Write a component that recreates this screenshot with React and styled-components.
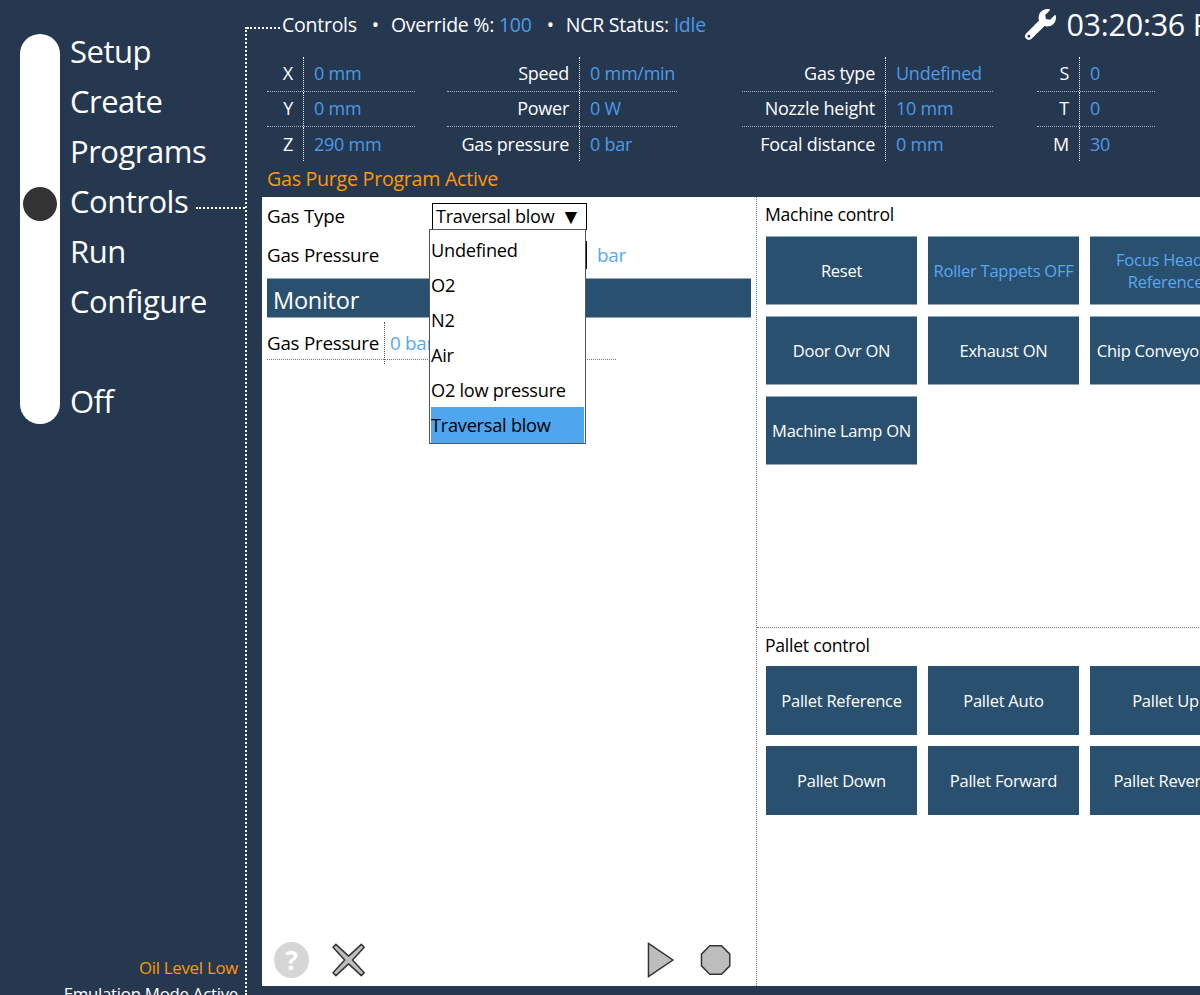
import React from 'react'
import styled, { createGlobalStyle } from 'styled-components'
import { FaWrench } from 'react-icons/fa'

const GlobalStyle = createGlobalStyle`
  html, body {
    margin: 0;
    padding: 0;
    background: #263750;
  }
  body {
    font-family: "Open Sans", "Noto Sans", sans-serif;
    font-size: 18px;
    letter-spacing: -0.25px;
    color: #000;
  }
  * {
    box-sizing: border-box;
  }
`

const Page = styled.div`
  width: 1200px;
  height: 995px;
  overflow: hidden;
  background: #263750;
`

const Shell = styled.div`
  display: flex;
  width: 1238px;
  height: 995px;
`

const Sidebar = styled.aside`
  display: flex;
  flex-direction: column;
  flex: 0 0 245px;
  height: 995px;
  overflow: hidden;
  color: #fff;
`

const SideTop = styled.div`
  display: flex;
  padding: 26px 0 0 20px;
`

const Pill = styled.div`
  flex: 0 0 40px;
  height: 390px;
  margin: 8px 10px 0 0;
  padding: 153px 3px 0;
  border-radius: 20px;
  background: #fff;
`

const Knob = styled.div`
  width: 34px;
  height: 34px;
  border-radius: 50%;
  background: #333;
`

const NavList = styled.nav`
  display: flex;
  flex-direction: column;
  flex: 1;
`

const NavItem = styled.div`
  display: flex;
  align-items: center;
  gap: 8px;
  height: 50px;
  margin-top: ${(p) => p.$gap || 0}px;
  font-size: 31px;
  letter-spacing: -0.5px;

  ${(p) =>
    p.$active &&
    `
    &::after {
      content: '';
      flex: 1;
      margin-top: 13px;
      border-top: 2px dotted #fff;
    }
  `}
`

const SideFooter = styled.div`
  display: flex;
  flex-direction: column;
  align-items: flex-end;
  margin-top: auto;
  padding-right: 7px;
  height: 40px;
  white-space: nowrap;
`

const OilWarning = styled.div`
  font-size: 16.8px;
  line-height: 26px;
  color: #ff9900;
`

const EmulationNote = styled.div`
  font-size: 16.8px;
  line-height: 26px;
  color: #fff;
`

const Main = styled.main`
  position: relative;
  flex: 1;
  min-width: 0;
  padding-left: 2px;

  &::before {
    content: '';
    position: absolute;
    left: 0;
    top: 27px;
    bottom: 0;
    border-left: 2px dotted #fff;
  }
`

const Header = styled.header`
  display: flex;
  align-items: center;
  height: 48px;
  font-size: 19.5px;
  color: #fff;

  &::before {
    content: '';
    width: 33px;
    margin: 8px 2px 0 0;
    border-top: 2px dotted #fff;
  }
`

const HeaderItem = styled.span`
  white-space: nowrap;
  &:not(:first-of-type)::before {
    content: '•';
    margin: 0 12px 0 15px;
  }
`

const Accent = styled.span`
  color: #4a9be8;
`

const Clock = styled.div`
  display: flex;
  align-items: center;
  gap: 10px;
  margin-left: auto;
  font-size: 30.5px;
  white-space: nowrap;
`

const Telemetry = styled.section`
  display: flex;
  margin-top: 9px;
  padding-left: 20px;
  color: #fff;
`

const Group = styled.div`
  flex: 0 0 ${(p) => p.$width}px;
  margin-left: ${(p) => p.$offset || 0}px;
`

const GroupRow = styled.div`
  display: grid;
  grid-template-columns: ${(p) => p.$label}px 1fr;
  height: 35px;
  line-height: 32px;

  &:not(:last-child) {
    border-bottom: 1px dotted #aab4c0;
  }
  &:last-child {
    height: 29px;
    line-height: 34px;
  }
`

const GroupLabel = styled.div`
  padding-right: 10px;
  text-align: right;
  white-space: nowrap;
`

const GroupValue = styled.div`
  padding-left: 10px;
  border-left: 1px dotted #fff;
  color: #4a9be8;
  white-space: nowrap;
`

const Notice = styled.div`
  height: 31px;
  margin-top: 10px;
  padding-left: 20px;
  font-size: 19.6px;
  line-height: 26px;
  color: #ff9900;
`

const Panel = styled.section`
  display: grid;
  grid-template-columns: 495px 1fr;
  height: 789px;
  margin-left: 15px;
  background: #fff;
`

const LeftPane = styled.div`
  display: flex;
  flex-direction: column;
  padding: 5px 5px 8px;
  border-right: 1px dotted #777;
`

const FormRow = styled.div`
  display: grid;
  grid-template-columns: 165px 155px auto;
  align-items: center;
  height: 28px;
  margin-bottom: ${(p) => p.$spacing || 0}px;
  white-space: nowrap;
`

const FieldLabel = styled.span`
  font-size: 18.8px;
`

const SelectWrap = styled.div`
  position: relative;
`

const SelectBox = styled.div`
  display: flex;
  align-items: center;
  justify-content: space-between;
  height: 27px;
  padding: 0 5px 0 3px;
  border: 1px solid #000;
`

const Caret = styled.span`
  font-size: 21px;
  line-height: 1;
`

const Menu = styled.ul`
  position: absolute;
  left: -3px;
  top: 26px;
  z-index: 2;
  width: 157px;
  margin: 0;
  padding: 2px 1px 0;
  list-style: none;
  border: 1px solid #555;
  background: #fff;
`

const MenuItem = styled.li`
  height: 35.2px;
  line-height: 36px;
  font-size: 18.2px;
  white-space: nowrap;
  background: ${(p) => (p.$selected ? '#4fa5ee' : 'transparent')};
`

const NumberBox = styled.div`
  height: 28px;
  border: 1px solid #000;
`

const Unit = styled.span`
  padding-left: 10px;
  font-size: 18.8px;
  color: #5aa7f0;
`

const SectionBar = styled.div`
  height: 40px;
  margin-top: 9px;
  padding-left: 6px;
  border-top: 1px solid #8fa5b8;
  border-bottom: 1px solid #8fa5b8;
  font-size: 23.5px;
  line-height: 42px;
  color: #fff;
  background: #2a5070;
`

const Readout = styled.div`
  display: grid;
  grid-template-columns: 117px 1fr;
  width: 349px;
  height: 39px;
  margin-top: 3px;
  padding-top: 1px;
  font-size: 18.8px;
  line-height: 42px;
  border-bottom: 1px dotted #777;
  white-space: nowrap;
`

const ReadoutValue = styled.div`
  padding-left: 5px;
  border-left: 1px dotted #555;
  color: #5aa7f0;
`

const Toolbar = styled.div`
  display: flex;
  align-items: center;
  height: 36px;
  margin-top: auto;
  padding: 0 20px 0 7px;
`

const HelpButton = styled.div`
  display: flex;
  align-items: center;
  justify-content: center;
  width: 36px;
  height: 36px;
  margin-right: 23px;
  border-radius: 50%;
  font-size: 26px;
  font-weight: 700;
  color: #fff;
  background: #d6d6d6;
`

const ToolIcon = styled.svg`
  display: block;
  margin-left: ${(p) => p.$offset || 0}px;
`

const RightPane = styled.div`
  display: flex;
  flex-direction: column;
`

const ControlSection = styled.div`
  height: ${(p) => p.$height}px;
  padding-left: 9px;
  border-bottom: ${(p) => (p.$divided ? '1px dotted #777' : 'none')};
`

const SectionTitle = styled.div`
  height: ${(p) => p.$height}px;
  margin-left: -1px;
  font-size: 17.6px;
  line-height: 35px;
`

const ButtonGrid = styled.div`
  display: grid;
  grid-template-columns: repeat(3, 151px);
  grid-auto-rows: 69px;
  gap: 11px;
`

const ControlButton = styled.div`
  display: flex;
  align-items: center;
  justify-content: center;
  text-align: center;
  font-size: 16.5px;
  line-height: 22px;
  color: ${(p) => (p.$on ? '#5aa7f0' : '#fff')};
  background: #2a5070;
  border-top: ${(p) => (p.$edged ? '1px solid #8fa5b8' : 'none')};
  border-bottom: ${(p) => (p.$edged ? '1px solid #8fa5b8' : 'none')};
`

const navItems = [
  { label: 'Setup' },
  { label: 'Create' },
  { label: 'Programs' },
  { label: 'Controls', active: true },
  { label: 'Run' },
  { label: 'Configure' },
  { label: 'Off', gap: 50 }
]

const telemetry = [
  {
    width: 148,
    label: 36,
    rows: [
      ['X', '0 mm'],
      ['Y', '0 mm'],
      ['Z', '290 mm']
    ]
  },
  {
    width: 230,
    label: 132,
    offset: 32,
    rows: [
      ['Speed', '0 mm/min'],
      ['Power', '0 W'],
      ['Gas pressure', '0 bar']
    ]
  },
  {
    width: 251,
    label: 143,
    offset: 65,
    rows: [
      ['Gas type', 'Undefined'],
      ['Nozzle height', '10 mm'],
      ['Focal distance', '0 mm']
    ]
  },
  {
    width: 118,
    label: 42,
    offset: 44,
    rows: [
      ['S', '0'],
      ['T', '0'],
      ['M', '30']
    ]
  }
]

const gasTypes = ['Undefined', 'O2', 'N2', 'Air', 'O2 low pressure', 'Traversal blow']

// the first line of the focus button sits further left than its centre, the nbsp's push it there
const machineButtons = [
  { label: 'Reset' },
  { label: 'Roller Tappets OFF', on: true },
  { label: 'Focus Head\u00a0\u00a0\u00a0 Reference', on: true },
  { label: 'Door Ovr ON' },
  { label: 'Exhaust ON' },
  { label: 'Chip Conveyor ON' },
  { label: 'Machine Lamp ON' }
]

const palletButtons = [
  'Pallet Reference',
  'Pallet Auto',
  'Pallet Up',
  'Pallet Down',
  'Pallet Forward',
  'Pallet Reverse'
]

const CloseIcon = () => (
  <ToolIcon width="34" height="34" viewBox="0 0 34 34">
    <path
      d="M4 1 L17 13 L30 1 L33 4 L21 17 L33 30 L30 33 L17 21 L4 33 L1 30 L13 17 L1 4 Z"
      fill="#bdbdbd"
      stroke="#333"
      strokeWidth="1.5"
      strokeLinejoin="round"
    />
  </ToolIcon>
)

const PlayIcon = () => (
  <ToolIcon $offset={282} width="28" height="38" viewBox="0 0 28 38">
    <path d="M1.5 2 L26.5 19 L1.5 36 Z" fill="#bdbdbd" stroke="#333" strokeWidth="1.5" />
  </ToolIcon>
)

const StopIcon = () => (
  <ToolIcon $offset={25} width="32" height="32" viewBox="0 0 32 32">
    <path
      d="M10 1.5 L22 1.5 L30.5 10 L30.5 22 L22 30.5 L10 30.5 L1.5 22 L1.5 10 Z"
      fill="#bdbdbd"
      stroke="#333"
      strokeWidth="1.5"
    />
  </ToolIcon>
)

export default function App() {
  return (
    <Page>
      <GlobalStyle />
      <Shell>
        <Sidebar>
          <SideTop>
            <Pill>
              <Knob />
            </Pill>
            <NavList>
              {navItems.map((item) => (
                <NavItem key={item.label} $active={item.active} $gap={item.gap}>
                  {item.label}
                </NavItem>
              ))}
            </NavList>
          </SideTop>
          <SideFooter>
            <OilWarning>Oil Level Low</OilWarning>
            <EmulationNote>Emulation Mode Active</EmulationNote>
          </SideFooter>
        </Sidebar>
        <Main>
          <Header>
            <HeaderItem>Controls</HeaderItem>
            <HeaderItem>
              Override %: <Accent>100</Accent>
            </HeaderItem>
            <HeaderItem>
              NCR Status: <Accent>Idle</Accent>
            </HeaderItem>
            <Clock>
              <FaWrench size={31} />
              03:20:36 PM
            </Clock>
          </Header>
          <Telemetry>
            {telemetry.map((group) => (
              <Group key={group.width} $width={group.width} $offset={group.offset}>
                {group.rows.map(([label, value]) => (
                  <GroupRow key={label} $label={group.label}>
                    <GroupLabel>{label}</GroupLabel>
                    <GroupValue>{value}</GroupValue>
                  </GroupRow>
                ))}
              </Group>
            ))}
          </Telemetry>
          <Notice>Gas Purge Program Active</Notice>
          <Panel>
            <LeftPane>
              <FormRow $spacing={11}>
                <FieldLabel>Gas Type</FieldLabel>
                <SelectWrap>
                  <SelectBox>
                    Traversal blow
                    <Caret>▼</Caret>
                  </SelectBox>
                  <Menu>
                    {gasTypes.map((gas) => (
                      <MenuItem key={gas} $selected={gas === 'Traversal blow'}>
                        {gas}
                      </MenuItem>
                    ))}
                  </Menu>
                </SelectWrap>
              </FormRow>
              <FormRow>
                <FieldLabel>Gas Pressure</FieldLabel>
                <NumberBox />
                <Unit>bar</Unit>
              </FormRow>
              <SectionBar>Monitor</SectionBar>
              <Readout>
                <span>Gas Pressure</span>
                <ReadoutValue>0 bar</ReadoutValue>
              </Readout>
              <Toolbar>
                <HelpButton>?</HelpButton>
                <CloseIcon />
                <PlayIcon />
                <StopIcon />
              </Toolbar>
            </LeftPane>
            <RightPane>
              <ControlSection $height={431} $divided>
                <SectionTitle $height={39}>Machine control</SectionTitle>
                <ButtonGrid>
                  {machineButtons.map((button) => (
                    <ControlButton key={button.label} $on={button.on} $edged>
                      {button.label}
                    </ControlButton>
                  ))}
                </ButtonGrid>
              </ControlSection>
              <ControlSection $height={358}>
                <SectionTitle $height={38}>Pallet control</SectionTitle>
                <ButtonGrid>
                  {palletButtons.map((label) => (
                    <ControlButton key={label}>{label}</ControlButton>
                  ))}
                </ButtonGrid>
              </ControlSection>
            </RightPane>
          </Panel>
        </Main>
      </Shell>
    </Page>
  )
}
